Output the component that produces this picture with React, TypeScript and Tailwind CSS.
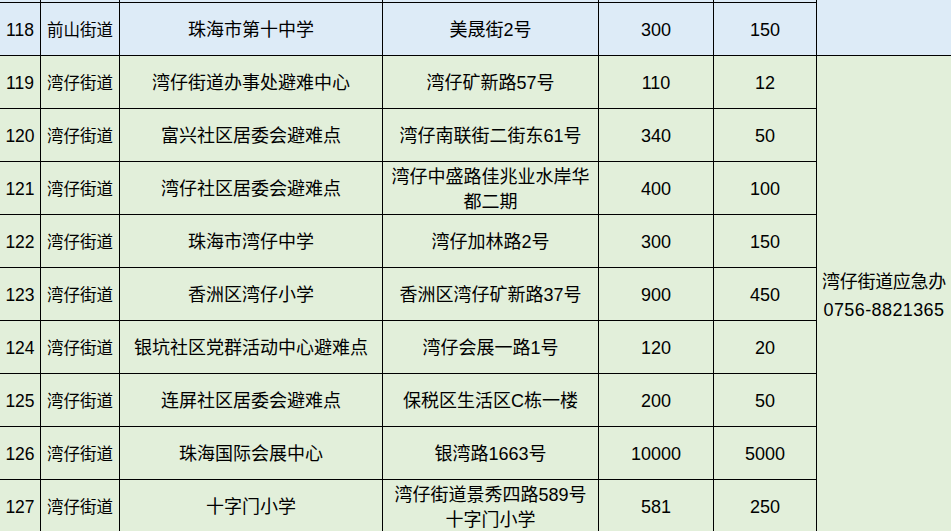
const ROWS: { no: number; street: string; name: string; addr: string[]; cap: string; ppl: string; blue?: boolean }[] = [
  { no: 118, street: "前山街道", name: "珠海市第十中学", addr: ["美晟街2号"], cap: "300", ppl: "150", blue: true },
  { no: 119, street: "湾仔街道", name: "湾仔街道办事处避难中心", addr: ["湾仔矿新路57号"], cap: "110", ppl: "12" },
  { no: 120, street: "湾仔街道", name: "富兴社区居委会避难点", addr: ["湾仔南联街二街东61号"], cap: "340", ppl: "50" },
  { no: 121, street: "湾仔街道", name: "湾仔社区居委会避难点", addr: ["湾仔中盛路佳兆业水岸华", "都二期"], cap: "400", ppl: "100" },
  { no: 122, street: "湾仔街道", name: "珠海市湾仔中学", addr: ["湾仔加林路2号"], cap: "300", ppl: "150" },
  { no: 123, street: "湾仔街道", name: "香洲区湾仔小学", addr: ["香洲区湾仔矿新路37号"], cap: "900", ppl: "450" },
  { no: 124, street: "湾仔街道", name: "银坑社区党群活动中心避难点", addr: ["湾仔会展一路1号"], cap: "120", ppl: "20" },
  { no: 125, street: "湾仔街道", name: "连屏社区居委会避难点", addr: ["保税区生活区C栋一楼"], cap: "200", ppl: "50" },
  { no: 126, street: "湾仔街道", name: "珠海国际会展中心", addr: ["银湾路1663号"], cap: "10000", ppl: "5000" },
  { no: 127, street: "湾仔街道", name: "十字门小学", addr: ["湾仔街道景秀四路589号", "十字门小学"], cap: "581", ppl: "250" },
];

const cell = "flex items-center justify-center text-center border-r border-b border-black pt-[3px]";

export default function App() {
  return (
    <div
      className="w-[951px] h-[531px] overflow-hidden bg-white text-black"
      style={{ fontFamily: '"Liberation Sans", "Noto Sans CJK SC", sans-serif' }}
    >
      <div className="grid grid-cols-[41px_79px_263px_216px_115px_103px_134px] grid-rows-[3px_repeat(10,53px)]">
        {/* tail of the row above */}
        <div className="bg-[#ddebf7] border-r border-b border-black" />
        <div className="bg-[#ddebf7] border-r border-b border-black" />
        <div className="bg-[#ddebf7] border-r border-b border-black" />
        <div className="bg-[#ddebf7] border-r border-b border-black" />
        <div className="bg-[#ddebf7] border-r border-b border-black" />
        <div className="bg-[#ddebf7] border-r border-b border-black" />
        <div className="row-span-2 col-start-7 row-start-1 bg-[#ddebf7] border-b border-black" />

        {ROWS.map((r, i) => {
          const bg = r.blue ? "bg-[#ddebf7]" : "bg-[#e2efda]";
          const row = { gridRowStart: i + 2 };
          return [
            <div key={`${r.no}a`} style={row} className={`${cell} ${bg} col-start-1 text-[17.5px]`}>{r.no}</div>,
            <div key={`${r.no}b`} style={row} className={`${cell} ${bg} col-start-2 text-[16.5px]`}>{r.street}</div>,
            <div key={`${r.no}c`} style={row} className={`${cell} ${bg} col-start-3 text-[18px]`}>{r.name}</div>,
            <div key={`${r.no}d`} style={row} className={`${cell} ${bg} col-start-4 flex-col text-[18px] leading-[25px]`}>
              {r.addr.map((l) => (
                <span key={l}>{l}</span>
              ))}
            </div>,
            <div key={`${r.no}e`} style={row} className={`${cell} ${bg} col-start-5 text-[18px]`}>{r.cap}</div>,
            <div key={`${r.no}f`} style={row} className={`${cell} ${bg} col-start-6 text-[18px]`}>{r.ppl}</div>,
          ];
        })}

        <div className="col-start-7 row-start-3 row-span-9 bg-[#e2efda] flex flex-col items-center justify-center text-[18px] leading-[28px] pt-[3px]">
          <span className="tracking-[-0.3px]">湾仔街道应急办</span>
          <span className="tracking-[0.4px]">0756-8821365</span>
        </div>
      </div>
    </div>
  );
}
